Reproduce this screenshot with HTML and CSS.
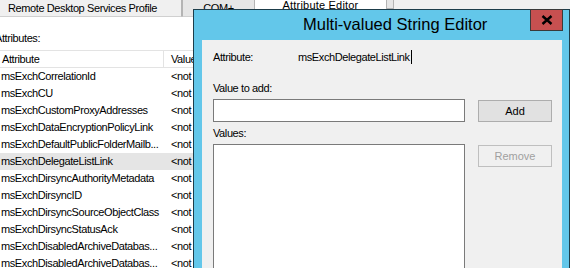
FILE: index.html
```html
<!DOCTYPE html>
<html lang="en">
<head>
  <meta charset="UTF-8" />
  <title>Multi-valued String Editor</title>
  <link rel="stylesheet" href="styles.css">
</head>
<body>
  <div class="props">
    <div class="tabs">
      <div class="tab tab-rds">Remote Desktop Services Profile</div>
      <div class="tab tab-com">COM+</div>
      <div class="tab tab-active">Attribute Editor</div>
      <div class="tab tab-rest"></div>
    </div>

    <div class="attr-label">Attributes:</div>

    <div class="list">
      <div class="list-head">
        <div class="col-name">Attribute</div>
        <div class="col-value">Value</div>
      </div>
      <div class="row"><div class="col-name">msExchCorrelationId</div><div class="col-value">&lt;not</div></div>
      <div class="row"><div class="col-name">msExchCU</div><div class="col-value">&lt;not</div></div>
      <div class="row"><div class="col-name">msExchCustomProxyAddresses</div><div class="col-value">&lt;not</div></div>
      <div class="row"><div class="col-name">msExchDataEncryptionPolicyLink</div><div class="col-value">&lt;not</div></div>
      <div class="row"><div class="col-name">msExchDefaultPublicFolderMailb...</div><div class="col-value">&lt;not</div></div>
      <div class="row selected"><div class="col-name">msExchDelegateListLink</div><div class="col-value">&lt;not</div></div>
      <div class="row"><div class="col-name">msExchDirsyncAuthorityMetadata</div><div class="col-value">&lt;not</div></div>
      <div class="row"><div class="col-name">msExchDirsyncID</div><div class="col-value">&lt;not</div></div>
      <div class="row"><div class="col-name">msExchDirsyncSourceObjectClass</div><div class="col-value">&lt;not</div></div>
      <div class="row"><div class="col-name">msExchDirsyncStatusAck</div><div class="col-value">&lt;not</div></div>
      <div class="row"><div class="col-name">msExchDisabledArchiveDatabas...</div><div class="col-value">&lt;not</div></div>
      <div class="row"><div class="col-name">msExchDisabledArchiveDatabas...</div><div class="col-value">&lt;not</div></div>
    </div>
  </div>

  <div class="dialog">
    <div class="dlg-title">Multi-valued String Editor</div>
    <button class="dlg-close" aria-label="Close">
      <svg width="12" height="10" viewBox="0 0 12 10">
        <path d="M1.5 1 L10.5 9 M10.5 1 L1.5 9" stroke="#000" stroke-width="2.4" fill="none"/>
      </svg>
    </button>

    <div class="dlg-body">
      <div class="attr-row">
        <span class="attr-key">Attribute:</span>
        <span class="attr-val">msExchDelegateListLink</span><span class="caret"></span>
      </div>

      <div class="editor">
        <label class="field-label" for="addValue">Value to add:</label>
        <div class="spacer"></div>
        <input type="text" id="addValue" class="textbox" />
        <button class="btn">Add</button>

        <div class="field-label">Values:</div>
        <div class="spacer"></div>
        <div class="valuebox"></div>
        <button class="btn" disabled>Remove</button>
      </div>
    </div>
  </div>
</body>
</html>
```

FILE: styles.css
```css
body {
  margin: 0;
  width: 570px;
  height: 268px;
  overflow: hidden;
  position: relative;
  background: #ffffff;
  font-family: 'Liberation Sans', Arial, sans-serif;
  font-size: 11px;
  letter-spacing: -0.4px;
  color: #000;
}

/* background property sheet */

.tabs {
  display: flex;
  height: 17px;
  background: #f0f0f0;
}

.tab {
  box-sizing: border-box;
  height: 17px;
  line-height: 17px;
  border-right: 1px solid #b4b4b4;
  border-bottom: 1px solid #d0d0d0;
  white-space: nowrap;
}

.tab-rds {
  width: 182px;
  padding-left: 8px;
  background: #f0f0f0;
}

.tab-com {
  width: 73px;
  text-align: center;
  background: #e6e6e6;
  border-left: 1px solid #b4b4b4;
}

.tab-active {
  width: 132px;
  text-align: center;
  background: #ffffff;
  line-height: 11px;
  border-bottom: none;
  letter-spacing: 0.2px;
}

.tab-rest {
  width: 7px;
  height: 9px;
  background: #e6e6e6;
  border-bottom: 1px solid #b4b4b4;
}

.attr-label {
  margin: 14px 0 0 -5px;
  height: 14px;
  line-height: 14px;
}

.list {
  margin-top: 5px;
}

.list-head,
.row {
  display: flex;
  height: 17px;
  line-height: 17px;
  white-space: nowrap;
}

.list-head {
  box-sizing: border-box;
  border-top: 1px solid #e3e3e3;
  border-bottom: 1px solid #e3e3e3;
  height: 18px;
  line-height: 16px;
}

.list-head .col-name {
  border-right: 1px solid #e3e3e3;
  padding-left: 2px;
}

.col-name {
  box-sizing: border-box;
  width: 164px;
  padding-left: 1px;
}

.col-value {
  padding-left: 7px;
}

.row.selected {
  background: #e5e5e5;
}

/* dialog window */

.dialog {
  position: absolute;
  left: 193px;
  top: 9px;
  width: 377px;
  height: 300px;
  box-sizing: border-box;
  border: 1px solid #1d3d4a;
  background: #63c7ea;
  padding: 0 7px 0 8px;
}

.dlg-title {
  height: 30px;
  line-height: 28px;
  padding-left: 101px;
  font-size: 16.5px;
  letter-spacing: 0;
  color: #000;
  white-space: nowrap;
}

.dlg-close {
  position: absolute;
  top: -1px;
  right: 6px;
  width: 33px;
  height: 22px;
  box-sizing: border-box;
  border: 1px solid #3a3a3a;
  background: #c75050;
  padding: 0;
  display: flex;
  align-items: center;
  justify-content: center;
}

.dlg-body {
  background: #f0f0f0;
  height: 270px;
  padding: 10px 0 0 11px;
  box-sizing: border-box;
}

.attr-row {
  display: flex;
  align-items: center;
  height: 14px;
  line-height: 14px;
}

.attr-key {
  width: 85px;
}

.caret {
  width: 1px;
  height: 14px;
  margin-left: 1px;
  background: #000;
}

.editor {
  display: grid;
  grid-template-columns: 252px 74px;
  column-gap: 13px;
  margin-top: 17px;
}

.field-label {
  height: 14px;
  line-height: 14px;
  margin-bottom: 4px;
}

.textbox {
  box-sizing: border-box;
  height: 23px;
  margin: 0;
  border: 1px solid #7a7a7a;
  background: #fff;
  font: inherit;
}

.textbox + .btn {
  margin-top: 1px;
}

.textbox ~ .field-label {
  margin-top: 4px;
  margin-bottom: 4px;
}

.valuebox {
  height: 140px;
  border: 1px solid #7a7a7a;
  background: #fff;
}

.btn {
  box-sizing: border-box;
  height: 22px;
  margin: 0;
  border: 1px solid #adadad;
  background: #e1e1e1;
  font: inherit;
  color: #000;
  align-self: start;
}

.btn:disabled {
  margin-top: 1px;
  border-color: #bfbfbf;
  background: #f0f0f0;
  color: #a0a0a0;
}
```
